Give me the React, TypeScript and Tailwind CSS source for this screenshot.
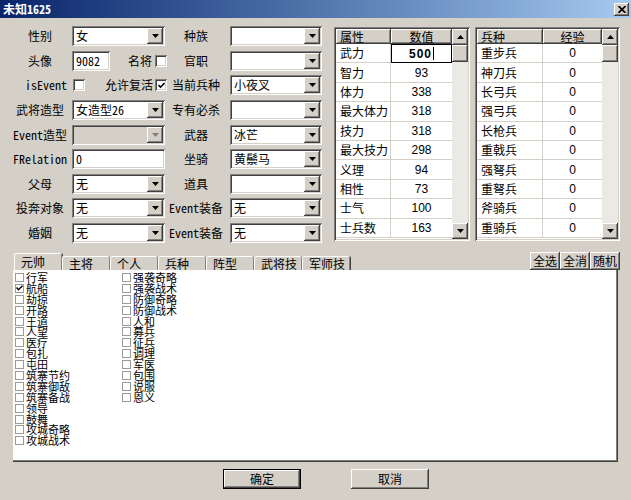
import React from "react";

const raised =
  "shadow-[inset_-1px_-1px_0_#404040,inset_1px_1px_0_#ffffff,inset_-2px_-2px_0_#808080,inset_2px_2px_0_#d4d0c8]";
const sunken =
  "shadow-[inset_1px_1px_0_#808080,inset_-1px_-1px_0_#ffffff,inset_2px_2px_0_#404040,inset_-2px_-2px_0_#d4d0c8]";

const Arrow = ({ up = false, color = "#000" }: { up?: boolean; color?: string }) => (
  <svg width="7" height="4" viewBox="0 0 7 4">
    <path d={up ? "M3.5 0 L7 4 L0 4Z" : "M0 0 L7 0 L3.5 4Z"} fill={color} />
  </svg>
);

const Tick = () => (
  <svg width="7" height="7" viewBox="0 0 7 7">
    <path d="M0.5 3 L2.5 5.2 L6.5 1" stroke="#000" strokeWidth="1.6" fill="none" />
  </svg>
);

const Combo = ({ value = "", disabled = false, w = "w-[93px]" }: { value?: string; disabled?: boolean; w?: string }) => (
  <div className={`flex h-[20px] shrink-0 items-center ${w} ${disabled ? "bg-[#d4d0c8]" : "bg-white"} ${sunken}`}>
    <span className="flex-1 whitespace-nowrap pl-[4px] leading-[16px]">{value}</span>
    <div className={`mr-[2px] flex h-[16px] w-[16px] items-center justify-center bg-[#d4d0c8] ${raised}`}>
      <Arrow color={disabled ? "#808080" : "#000"} />
    </div>
  </div>
);

const Input = ({ value, w }: { value: string; w: string }) => (
  <div className={`flex h-[20px] shrink-0 items-center bg-white pl-[4px] leading-[16px] ${w} ${sunken}`}>{value}</div>
);

const Check = ({ checked = false }: { checked?: boolean }) => (
  <div className={`flex h-[12px] w-[12px] shrink-0 items-center justify-center bg-white ${sunken}`}>
    {checked && <Tick />}
  </div>
);

const Row = ({
  label,
  field,
  label2,
  field2,
  labelClass = "text-center",
}: {
  label: string;
  field: React.ReactNode;
  label2: string;
  field2: React.ReactNode;
  labelClass?: string;
}) => (
  <div className="flex h-[24.6px] items-center">
    <div className={`ml-[10px] w-[60px] shrink-0 whitespace-nowrap ${labelClass}`}>{label}</div>
    <div className="ml-[2px] flex w-[93px] shrink-0 items-center">{field}</div>
    <div className="ml-[1px] w-[60px] shrink-0 whitespace-nowrap text-center">{label2}</div>
    <div className="ml-[4px]">{field2}</div>
  </div>
);

const Scrollbar = () => (
  <div className="flex w-[16px] shrink-0 flex-col bg-[#ebe9e4]">
    <div className={`flex h-[16px] items-center justify-center bg-[#d4d0c8] ${raised}`}>
      <Arrow up />
    </div>
    <div className={`h-[17px] bg-[#d4d0c8] ${raised}`} />
    <div className="flex-1" />
    <div className={`flex h-[16px] items-center justify-center bg-[#d4d0c8] ${raised}`}>
      <Arrow />
    </div>
  </div>
);

const Table = ({
  grid,
  head,
  rows,
  edit = false,
}: {
  grid: string;
  head: [string, string];
  rows: [string, string][];
  edit?: boolean;
}) => (
  <div className={`flex h-[214px] bg-white p-[2px] ${sunken}`}>
    <div className={`grid content-start ${grid}`}>
      <div className={`flex h-[15px] items-center bg-[#d4d0c8] pl-[4px] ${raised}`}>{head[0]}</div>
      <div className={`flex h-[15px] items-center justify-center bg-[#d4d0c8] ${raised}`}>{head[1]}</div>
      {rows.map(([a, b], i) => (
        <React.Fragment key={a}>
          <div className="flex h-[19.4px] items-center border-r border-b border-[#d4d0c8] pl-[4px]">{a}</div>
          {edit && i === 0 ? (
            <div className="flex h-[19.4px] items-center justify-center border border-black font-['Liberation_Sans'] font-bold tracking-[1px]">
              {b}
              <span className="ml-[1px] h-[13px] w-[1px] bg-black" />
            </div>
          ) : (
            <div className="flex h-[19.4px] items-center justify-center border-b border-[#d4d0c8] font-['Liberation_Sans']">
              {b}
            </div>
          )}
        </React.Fragment>
      ))}
    </div>
    <Scrollbar />
  </div>
);

const attrs: [string, string][] = [
  ["武力", "500"],
  ["智力", "93"],
  ["体力", "338"],
  ["最大体力", "318"],
  ["技力", "318"],
  ["最大技力", "298"],
  ["义理", "94"],
  ["相性", "73"],
  ["士气", "100"],
  ["士兵数", "163"],
];

const troops: [string, string][] = ["重步兵", "神刀兵", "长弓兵", "强弓兵", "长枪兵", "重戟兵", "强弩兵", "重弩兵", "斧骑兵", "重骑兵"].map(
  (t) => [t, "0"]
);

const tabs = ["元帅", "主将", "个人", "兵种", "阵型", "武将技", "军师技"];

const list1 = ["行军", "航船", "劫掠", "开路", "王道", "人望", "医疗", "包扎", "屯田", "筑寨节约", "筑寨御敌", "筑寨备战", "领导", "鼓舞", "攻城奇略", "攻城战术"];
const list2 = ["强袭奇略", "强袭战术", "防御奇略", "防御战术", "人和", "募兵", "征兵", "调理", "军医", "包围", "说服", "恩义"];

const ListItem = ({ text, checked = false }: { text: string; checked?: boolean }) => (
  <div className="flex h-[10.9px] items-center">
    <div className="flex h-[9px] w-[9px] shrink-0 items-center justify-center border border-[#9a9a9a] bg-white">
      {checked && (
        <svg width="7" height="6" viewBox="0 0 7 6">
          <path d="M0.5 2.5 L2.5 4.7 L6.5 0.7" stroke="#000" strokeWidth="1.5" fill="none" />
        </svg>
      )}
    </div>
    <span className="ml-[2px] whitespace-nowrap text-[11px] leading-[10.9px]">{text}</span>
  </div>
);

export default function App() {
  return (
    <div className="flex h-[500px] w-[631px] flex-col overflow-hidden bg-[#d4d0c8] font-['Noto_Sans_Mono_CJK_SC','Noto_Sans_CJK_SC',sans-serif] text-[12px] leading-[16px] text-black">
      {/* Title bar */}
      <div className="flex h-[18px] shrink-0 items-center justify-between bg-linear-to-r from-[#0a246a] to-[#a6caf0] pr-[2px] pl-[3px]">
        <span className="font-bold text-white">未知1625</span>
        <div className={`flex h-[13px] w-[15px] items-center justify-center bg-[#d4d0c8] ${raised}`}>
          <svg width="8" height="7" viewBox="0 0 8 7">
            <path d="M0.5 0 L7.5 7 M7.5 0 L0.5 7" stroke="#000" strokeWidth="1.6" />
          </svg>
        </div>
      </div>

      {/* Top section */}
      <div className="flex h-[234px] shrink-0">
        <div className="w-[330px] shrink-0 pt-[6px]">
          <Row label="性别" field={<Combo value="女" />} label2="种族" field2={<Combo w="w-[92px]" />} />
          <Row
            label="头像"
            field={
              <>
                <Input value="9082" w="w-[38px]" />
                <span className="ml-[18px] whitespace-nowrap">名将</span>
                <div className="ml-[3px]">
                  <Check />
                </div>
              </>
            }
            label2="官职"
            field2={<Combo w="w-[92px]" />}
          />
          <Row
            label="isEvent"
            labelClass="text-right pr-[3px]"
            field={
              <>
                <div className="ml-[1px]">
                  <Check />
                </div>
                <span className="ml-[20px] whitespace-nowrap">允许复活</span>
                <div className="ml-[2px]">
                  <Check checked />
                </div>
              </>
            }
            label2="当前兵种"
            field2={<Combo value="小夜叉" w="w-[92px]" />}
          />
          <Row label="武将造型" field={<Combo value="女造型26" />} label2="专有必杀" field2={<Combo w="w-[92px]" />} />
          <Row label="Event造型" field={<Combo disabled />} label2="武器" field2={<Combo value="冰芒" w="w-[92px]" />} />
          <Row
            label="FRelation"
            field={<Input value="0" w="w-[93px]" />}
            label2="坐骑"
            field2={<Combo value="黄鬃马" w="w-[92px]" />}
          />
          <Row label="父母" field={<Combo value="无" />} label2="道具" field2={<Combo w="w-[92px]" />} />
          <Row label="投奔对象" field={<Combo value="无" />} label2="Event装备" field2={<Combo value="无" w="w-[92px]" />} />
          <Row label="婚姻" field={<Combo value="无" />} label2="Event装备" field2={<Combo value="无" w="w-[92px]" />} />
        </div>

        <div className="mt-[9px] ml-[4px] w-[136px] shrink-0">
          <Table grid="grid-cols-[55px_61px]" head={["属性", "数值"]} rows={attrs} edit />
        </div>
        <div className="mt-[9px] ml-[5px] w-[145px] shrink-0">
          <Table grid="grid-cols-[66px_59px]" head={["兵种", "经验"]} rows={troops} />
        </div>
      </div>

      {/* Tabs */}
      <div className="flex h-[18px] shrink-0 items-end">
        <div className="ml-[14px] flex items-end">
          {tabs.map((t, i) => (
            <div
              key={t}
              className={`flex w-[48px] items-center rounded-t-[2px] border-t border-l border-white bg-[#d4d0c8] pl-[6px] shadow-[inset_-1px_0_0_#808080,1px_0_0_#404040] ${
                i === 0 ? "h-[17px]" : "h-[14px]"
              }`}
            >
              {t}
            </div>
          ))}
        </div>
        <div className="mr-[11px] ml-auto flex self-start">
          {["全选", "全消", "随机"].map((b) => (
            <div key={b} className={`flex h-[18px] w-[30px] items-center justify-center bg-[#d4d0c8] ${raised}`}>
              {b}
            </div>
          ))}
        </div>
      </div>

      {/* Tab page */}
      <div className="ml-[13px] flex h-[192px] w-[605px] shrink-0 border-r border-b border-[#404040] bg-white pt-[2px] pl-[2px] shadow-[inset_-1px_-1px_0_#808080]">
        <div className="w-[107px] font-['Noto_Sans_CJK_SC',sans-serif]">
          {list1.map((t) => (
            <ListItem key={t} text={t} checked={t === "航船"} />
          ))}
        </div>
        <div className="font-['Noto_Sans_CJK_SC',sans-serif]">
          {list2.map((t) => (
            <ListItem key={t} text={t} />
          ))}
        </div>
      </div>

      {/* Buttons */}
      <div className="mt-[7px] flex">
        <div className="ml-[223px] h-[20px] w-[78px] border border-black">
          <div className={`flex h-full w-full items-center justify-center bg-[#d4d0c8] ${raised}`}>确定</div>
        </div>
        <div className={`ml-[50px] flex h-[20px] w-[78px] items-center justify-center bg-[#d4d0c8] ${raised}`}>取消</div>
      </div>
    </div>
  );
}
